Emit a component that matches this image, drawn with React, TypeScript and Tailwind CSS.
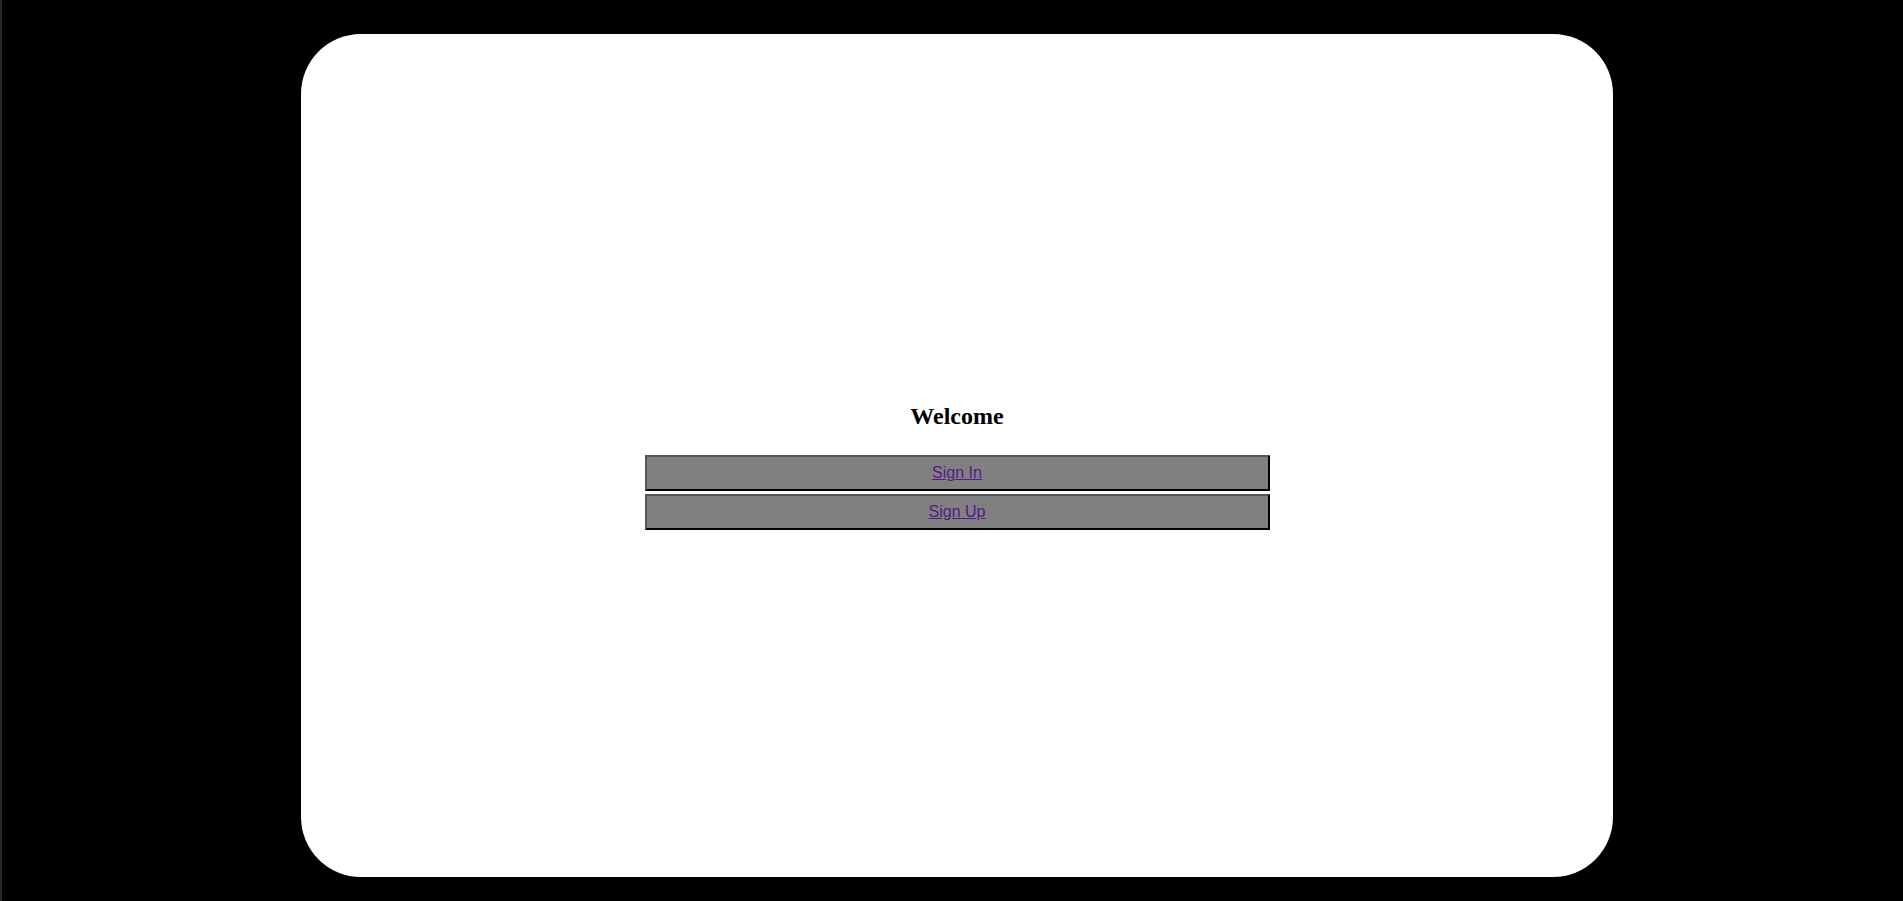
export default function App() {
  const links = ["Sign In", "Sign Up"];

  return (
    <div className="flex h-screen w-full bg-black">
      <div className="w-[2px] shrink-0 bg-[#2a2a2a]" />
      <div className="flex-1 pl-[299px] pr-[290px] pt-[34px] pb-[24px]">
        <div className="flex h-full w-full flex-col items-center justify-center rounded-[60px] bg-white">
          <div className="flex w-[625px] flex-col">
            <h2 className="mt-[21px] mb-[25px] text-center font-['Liberation_Serif',serif] text-[24px] leading-[27px] font-bold text-black">
              Welcome
            </h2>
            <div className="flex flex-col gap-[3px]">
              {links.map((label) => (
                <div
                  key={label}
                  className="flex h-[36px] items-center justify-center border-2 border-t-[#555] border-l-[#555] border-r-black border-b-black bg-[#808080] pt-px"
                >
                  <a
                    href="#"
                    className="font-['Liberation_Sans',Arial,sans-serif] text-base text-[#551a8b] underline"
                  >
                    {label}
                  </a>
                </div>
              ))}
            </div>
          </div>
        </div>
      </div>
    </div>
  );
}
